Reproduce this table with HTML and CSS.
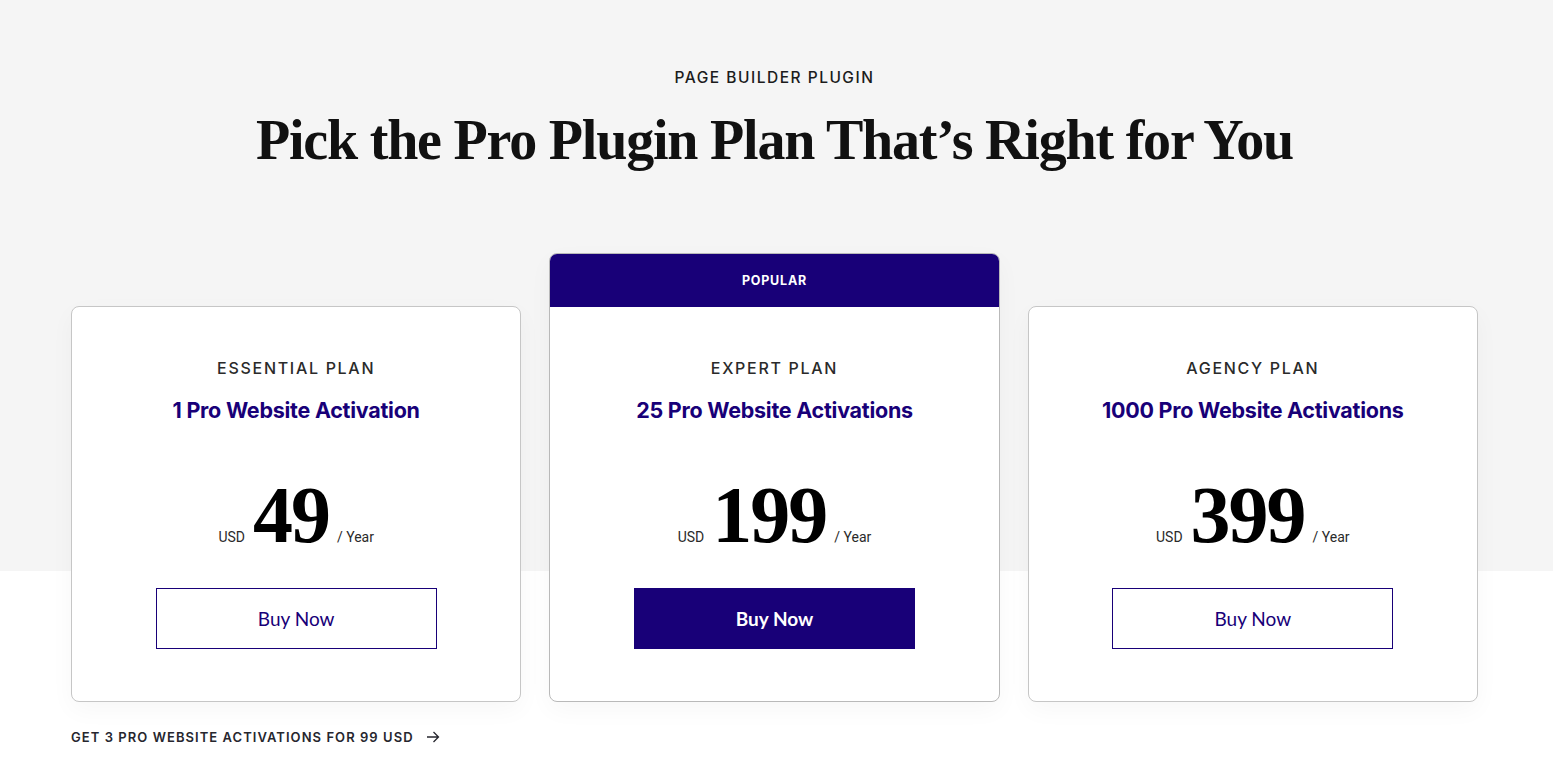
FILE: index.html
```html
<!DOCTYPE html>
<html lang="en">
<head>
<meta charset="utf-8">
<title>Pricing</title>
<link rel="stylesheet" href="styles.css">
</head>
<body>
<main class="page">
  <header class="intro">
    <p class="eyebrow">PAGE BUILDER PLUGIN</p>
    <h1 class="title">Pick the Pro Plugin Plan That’s Right for You</h1>
  </header>
  <section class="plans">
    <article class="plan">
      <div class="plan-body">
        <h2 class="plan-name">ESSENTIAL PLAN</h2>
        <p class="plan-desc">1 Pro Website Activation</p>
        <div class="price"><span class="cur">USD</span><span class="amount">49</span><span class="per">/ Year</span></div>
        <a class="btn" href="#">Buy Now</a>
      </div>
    </article>
    <article class="plan plan-popular">
      <div class="badge">POPULAR</div>
      <div class="plan-body">
        <h2 class="plan-name">EXPERT PLAN</h2>
        <p class="plan-desc">25 Pro Website Activations</p>
        <div class="price"><span class="cur">USD</span><span class="amount">199</span><span class="per">/ Year</span></div>
        <a class="btn btn-solid" href="#">Buy Now</a>
      </div>
    </article>
    <article class="plan">
      <div class="plan-body">
        <h2 class="plan-name">AGENCY PLAN</h2>
        <p class="plan-desc">1000 Pro Website Activations</p>
        <div class="price"><span class="cur">USD</span><span class="amount">399</span><span class="per">/ Year</span></div>
        <a class="btn" href="#">Buy Now</a>
      </div>
    </article>
  </section>
  <a class="offer" href="#">GET 3 PRO WEBSITE ACTIVATIONS FOR 99 USD <svg class="arrow" width="14" height="12" viewBox="0 0 14 12" aria-hidden="true"><path d="M1 6h11.5M7.5 1l5 5-5 5" fill="none" stroke="#26262e" stroke-width="1.3"/></svg></a>
</main>
</body>
</html>
```
FILE: styles.css
```css
* { box-sizing: border-box; }
html, body { margin: 0; padding: 0; }
body {
  font-family: "Inter", "Liberation Sans", Arial, sans-serif;
  color: #222;
  background: #fff;
}
.page {
  background: linear-gradient(#f5f5f5 0, #f5f5f5 571px, #fff 571px);
  min-height: 782px;
  padding: 0 75px 0 71px;
}
.intro {
  text-align: center;
  padding-top: 68px;
}
.eyebrow {
  margin: 0;
  font-size: 15.5px;
  font-weight: 500;
  letter-spacing: 1.5px;
  line-height: 20px;
  color: #1c1c1c;
}
.title {
  margin: 20px 0 0;
  font-family: "Liberation Serif", "Times New Roman", serif;
  font-weight: 700;
  font-size: 56px;
  line-height: 64px;
  letter-spacing: -1.2px;
  color: #111;
}
.plans {
  display: flex;
  align-items: flex-end;
  gap: 28px;
  margin-top: 81px;
}
.plan {
  width: 451px;
  background: #fff;
  border: 1px solid #c6c6c6;
  border-radius: 8px;
  box-shadow: 0 8px 24px rgba(0,0,0,0.035);
  overflow: hidden;
}
.plan-popular { border-color: #b9b9b9; }
.badge {
  height: 53px;
  background: #180078;
  color: #fff;
  font-size: 12.5px;
  font-weight: 700;
  letter-spacing: 0.8px;
  display: flex;
  align-items: center;
  justify-content: center;
}
.plan-body {
  height: 394px;
  display: flex;
  flex-direction: column;
  align-items: center;
  padding-top: 51px;
}
.plan-name {
  margin: 0;
  font-size: 16px;
  font-weight: 500;
  letter-spacing: 1.7px;
  line-height: 20px;
  color: #2a2a2a;
}
.plan-desc {
  margin: 20px 0 0;
  font-size: 21.5px;
  font-weight: 700;
  letter-spacing: -0.25px;
  line-height: 24px;
  color: #180078;
}
.price {
  margin-top: 55px;
  display: flex;
  align-items: baseline;
  gap: 8px;
  height: 76px;
}
.cur, .per {
  font-family: "Roboto", "Liberation Sans", sans-serif;
  font-size: 14px;
  color: #2a2a2a;
}
.amount {
  font-family: "Liberation Serif", "Times New Roman", serif;
  font-weight: 700;
  font-size: 80px;
  line-height: 76px;
  letter-spacing: -2px;
  color: #000;
}
.btn {
  margin-top: 35px;
  width: 281px;
  height: 61px;
  border: 1px solid #180078;
  display: flex;
  align-items: center;
  justify-content: center;
  text-decoration: none;
  color: #180078;
  font-family: "Lato", "Liberation Sans", sans-serif;
  font-size: 19px;
  font-weight: 400;
}
.btn-solid {
  background: #180078;
  color: #fff;
  font-weight: 700;
}
.offer {
  display: inline-flex;
  align-items: center;
  gap: 12px;
  margin-top: 27px;
  font-size: 13px;
  font-weight: 600;
  letter-spacing: 1.05px;
  color: #26262e;
  text-decoration: none;
}
.arrow { display: block; }
```
